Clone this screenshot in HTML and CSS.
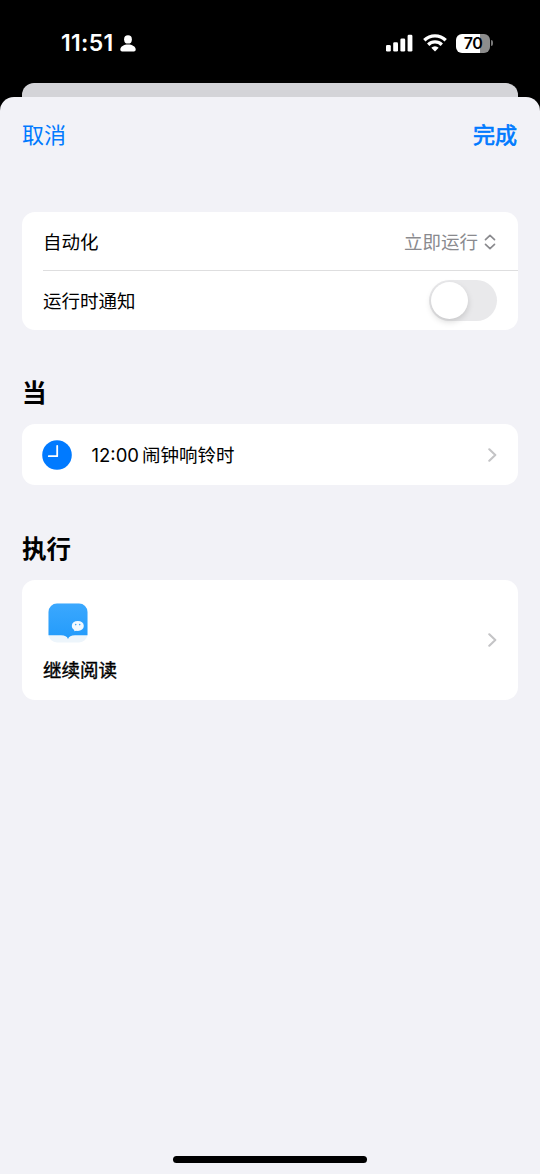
FILE: index.html
```html
<!DOCTYPE html>
<html lang="zh-CN">
<head>
    <meta charset="UTF-8">
    <meta name="viewport" content="width=device-width, initial-scale=1.0">
    <title>自动化</title>
    <link rel="stylesheet" href="styles.css">
</head>
<body>
    <header class="status-bar">
        <div class="status-left">
            <span class="time">11:51</span>
            <svg class="person" width="16" height="17" viewBox="0 0 16 17" fill="#fff">
                <ellipse cx="8" cy="4.4" rx="3.9" ry="4.2"/>
                <path d="M0.3 14.6C0.3 11.6 4 9.6 8 9.6s7.7 2 7.7 5c0 1.300-.7 1.900-1.800 1.900H2.100C1 16.500 .3 15.900 .3 14.600z"/>
            </svg>
        </div>
        <div class="status-right">
            <svg width="27" height="18" viewBox="0 0 27 18" fill="#fff">
                <rect x="0" y="11" width="4.8" height="6.5" rx="1.3"/>
                <rect x="7.2" y="8.3" width="4.8" height="9.2" rx="1.3"/>
                <rect x="14.4" y="4.5" width="4.8" height="13" rx="1.3"/>
                <rect x="21.6" y="0.7" width="4.8" height="16.8" rx="1.3"/>
            </svg>
            <svg class="wifi" width="24" height="18" viewBox="0 0 24 18" fill="none" stroke="#fff" stroke-width="3.3">
                <path d="M1.3 6.3a15.3 15.3 0 0 1 21.4 0"/>
                <path d="M5.2 10.7a9.700 9.700 0 0 1 13.6 0"/>
                <path d="M12 17.500l-3.700-3.700a5.300 5.300 0 0 1 7.400 0z" fill="#fff" stroke="none"/>
            </svg>
            <div class="battery">70</div>
            <div class="battery-cap"></div>
        </div>
    </header>

    <div class="back-sheet"></div>

    <main class="sheet">
        <nav class="nav">
            <a class="cancel">取消</a>
            <a class="done">完成</a>
        </nav>

        <section class="card settings">
            <div class="row">
                <span>自动化</span>
                <span class="value">立即运行
                    <svg width="12" height="16" viewBox="0 0 12 16" fill="none" stroke="#8a8a8e" stroke-width="1.7" stroke-linecap="round" stroke-linejoin="round">
                        <path d="M1.5 5.600L6 1.400l4.500 4.200M1.500 10.400L6 14.600l4.500-4.200"/>
                    </svg>
                </span>
            </div>
            <div class="row notify">
                <span>运行时通知</span>
                <div class="toggle"></div>
            </div>
        </section>

        <h2>当</h2>
        <section class="card when">
            <svg class="clock" width="30" height="30" viewBox="0 0 30 30">
                <circle cx="15" cy="15" r="14.8" fill="#007aff"/>
                <path d="M15.2 5.8v10.400H6.800" fill="none" stroke="#fff" stroke-width="1.8" stroke-linecap="round" stroke-linejoin="round"/>
            </svg>
            <span class="when-text"><span class="num">12:00</span>闹钟响铃时</span>
            <svg class="chevron" width="9" height="14" viewBox="0 0 9 14">
                <path d="M1.3 1.300L7.300 7l-6 5.700"/>
            </svg>
        </section>

        <h2>执行</h2>
        <section class="card action">
            <div class="action-body">
                <svg class="app-icon" width="40" height="40" viewBox="0 0 40 40">
                    <defs>
                        <linearGradient id="blue" x1="0" y1="0" x2="0" y2="1">
                            <stop offset="0" stop-color="#3ba8fe"/>
                            <stop offset="1" stop-color="#239bfb"/>
                        </linearGradient>
                    </defs>
                    <rect x="0.5" y="0.5" width="39" height="39" rx="8.5" fill="#edf5fb"/>
                    <path d="M0.5 9a8.500 8.500 0 0 1 8.500-8.500h22a8.500 8.500 0 0 1 8.500 8.500v23.200H27c-4 0-6 1.200-7 3.800-1-2.600-3-3.800-7-3.800H0.500z" fill="url(#blue)"/>
                    <ellipse cx="29.8" cy="22.9" rx="6" ry="5" fill="#f2f9ff"/>
                    <path d="M26 26l.4 2.300 3-1z" fill="#f2f9ff"/>
                    <circle cx="27.7" cy="21.6" r="0.8" fill="#46a9f8"/>
                    <circle cx="31.7" cy="21.6" r="0.8" fill="#46a9f8"/>
                </svg>
                <span class="action-name">继续阅读</span>
            </div>
            <svg class="chevron" width="9" height="14" viewBox="0 0 9 14">
                <path d="M1.3 1.300L7.300 7l-6 5.700"/>
            </svg>
        </section>

        <div class="home-indicator"></div>
    </main>
</body>
</html>
```
FILE: styles.css
```css
* {
    box-sizing: border-box;
}
body {
    margin: 0;
    height: 1174px;
    display: flex;
    flex-direction: column;
    background-color: #000;
    color: #000;
    font-family: Inter, "Noto Sans CJK SC", sans-serif;
    font-size: 18.5px;
    line-height: 26px;
    overflow: hidden;
}
svg {
    display: block;
    flex: none;
}

/* status bar */
.status-bar {
    height: 83px;
    padding: 30px 48px 0 61px;
    display: flex;
    justify-content: space-between;
    align-items: flex-start;
    color: #fff;
}
.status-left, .status-right {
    display: flex;
    align-items: center;
    height: 26px;
}
.time {
    font-size: 23px;
    font-weight: 600;
    letter-spacing: 0.3px;
    width: 54px;
    white-space: nowrap;
}
.person {
    margin-left: 5px;
}
.wifi {
    margin: 0 9px 0 10px;
}
.status-right {
    margin-right: -1px;
}
.battery {
    width: 34px;
    height: 19px;
    border-radius: 6px;
    background: linear-gradient(to right, #fff 70%, #8c8c8c 70%);
    color: #000;
    font-size: 16px;
    font-weight: 600;
    line-height: 19px;
    text-align: center;
    letter-spacing: -0.5px;
}
.battery-cap {
    width: 2px;
    height: 6px;
    margin-left: 1px;
    border-radius: 0 2px 2px 0;
    background-color: #777;
}

/* sheets */
.back-sheet {
    height: 14px;
    margin: 0 22px;
    border-radius: 12px 12px 0 0;
    background-color: #d4d4d8;
}
.sheet {
    flex: 1;
    display: flex;
    flex-direction: column;
    padding: 0 22px;
    border-radius: 14px 14px 0 0;
    background-color: #f2f2f7;
}
.nav {
    height: 115px;
    padding: 25px 1px 0 0;
    display: flex;
    justify-content: space-between;
    align-items: flex-start;
    color: #007aff;
    font-size: 22px;
}
.done {
    -webkit-text-stroke: 0.7px #007aff;
}
h2 {
    margin: 0;
    height: 94.5px;
    padding-top: 46.5px;
    font-size: 24.5px;
    line-height: 34px;
    font-weight: 700;
}

/* cards */
.card {
    background-color: #fff;
    border-radius: 13px;
}
.settings {
    height: 117.5px;
    padding-left: 21px;
}
.row {
    height: 58px;
    padding: 2px 22px 0 0;
    display: flex;
    justify-content: space-between;
    align-items: center;
}
.notify {
    height: 59.5px;
    padding: 1px 21px 0 0;
    border-top: 1px solid #dededf;
}
.value {
    display: flex;
    align-items: center;
    gap: 6px;
    color: #8a8a8e;
}
.toggle {
    width: 68px;
    height: 41px;
    padding: 2px;
    border-radius: 21px;
    background-color: #e9e9eb;
}
.toggle::before {
    content: "";
    display: block;
    width: 37px;
    height: 37px;
    border-radius: 50%;
    background-color: #fff;
    box-shadow: 0 3px 6px rgba(0, 0, 0, 0.15);
}
.when {
    height: 61px;
    padding: 0 21.5px 0 19px;
    display: flex;
    align-items: center;
}
.clock {
    margin-left: 0.5px;
}
.when-text {
    flex: 1;
    margin-left: 20px;
}
.num {
    margin-right: 3px;
}
.chevron {
    fill: none;
    stroke: #c4c4c6;
    stroke-width: 2.1;
    stroke-linecap: round;
    stroke-linejoin: round;
}
.action {
    height: 120px;
    padding: 0 21.5px 0 21px;
    display: flex;
    align-items: center;
    justify-content: space-between;
}
.action-body {
    display: flex;
    flex-direction: column;
    gap: 14px;
    padding-top: 6px;
}
.app-icon {
    margin-left: 4.5px;
}
.action-name {
    -webkit-text-stroke: 0.4px #000;
}
.home-indicator {
    width: 194px;
    height: 7px;
    margin: auto auto 11px;
    border-radius: 4px;
    background-color: #000;
}
```
